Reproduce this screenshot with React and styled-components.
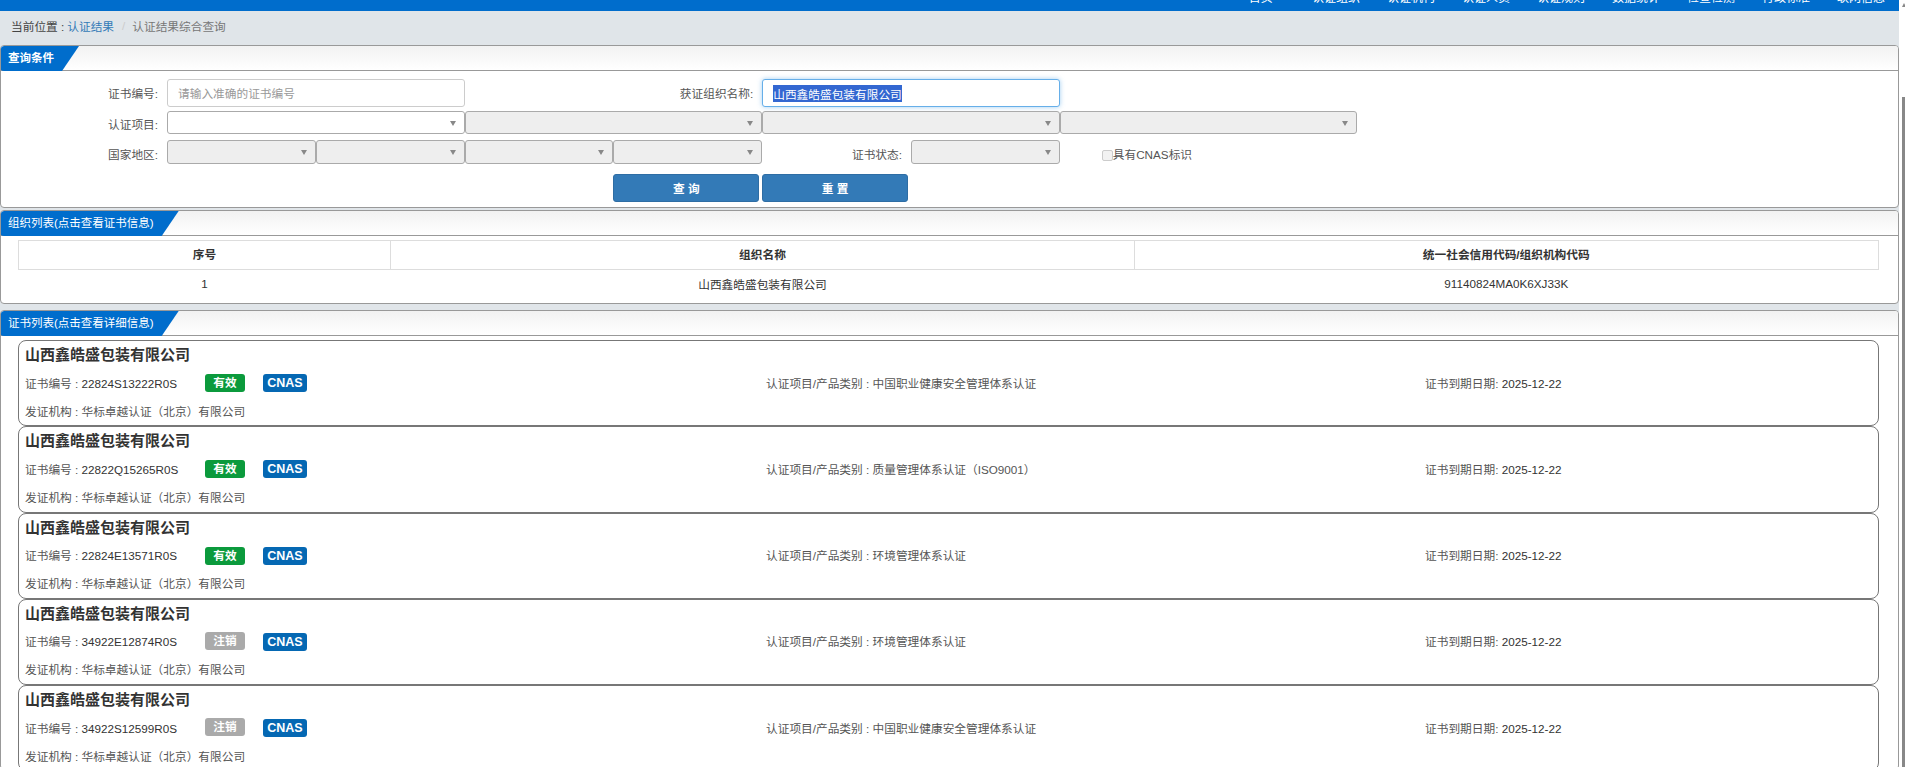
import React, { useEffect, useRef } from "react";
import styled, { createGlobalStyle } from "styled-components";

const GlobalStyle = createGlobalStyle`
  html, body {
    margin: 0;
    padding: 0;
    background: #fff;
    overflow: hidden;
  }
  body {
    font-family: "Liberation Sans", "Noto Sans CJK SC", sans-serif;
    font-size: 11.7px;
    color: #333;
  }
  * {
    box-sizing: border-box;
  }
`;

const Page = styled.div`
  display: flex;
  width: 1905px;
  height: 767px;
  overflow: hidden;
`;

const Main = styled.div`
  width: 1899px;
  flex: none;
  background: #e0e5e9;
`;

const Gutter = styled.div`
  flex: 1;
  background: #fff;
  padding: 3px 0 0 3px;
`;

const ScrollArrow = styled.div`
  width: 0;
  height: 0;
  border-left: 2px solid transparent;
  border-right: 2px solid transparent;
  border-bottom: 4px solid #888;
`;

const ScrollThumb = styled.div`
  margin-top: 90px;
  height: 670px;
  background: #888;
`;

const TopBar = styled.div`
  height: 11px;
  background: #006dcc;
  display: flex;
  justify-content: flex-end;
  align-items: flex-start;
  gap: 27px;
  padding-right: 14px;
  overflow: hidden;
`;

const NavItem = styled.span`
  color: #fff;
  font-size: 12px;
  line-height: 16px;
  margin-top: -10px;
  white-space: nowrap;

  &:first-child {
    margin-right: 12px;
  }
`;

const Crumbs = styled.div`
  height: 34px;
  display: flex;
  align-items: center;
  padding: 0 0 6px 11px;
  color: #444;
`;

const CrumbLink = styled.span`
  color: #337ab7;
  margin-left: 3px;
`;

const CrumbSep = styled.span`
  color: #ccc;
  margin: 0 7px 0 8px;
`;

const CrumbNow = styled.span`
  color: #777;
`;

const Panel = styled.section`
  background: #fff;
  border: 1px solid #999;
  border-radius: 4px;
  height: ${(p) => p.$height};
  margin-bottom: ${(p) => p.$gap || "0"};
  overflow: hidden;
`;

const PanelHead = styled.div`
  height: 25px;
  background: linear-gradient(#f2f2f2, #fff);
  border-bottom: 1px solid #999;
`;

const PanelTab = styled.div`
  display: inline-block;
  height: 25px;
  margin-left: -1px;
  padding: 0 25px 0 8px;
  line-height: 25px;
  color: #fff;
  background: #006dcc;
  font-size: 11.5px;
  font-weight: ${(p) => (p.$bold ? "bold" : "normal")};
  border-radius: 4px 0 0 4px;
  clip-path: polygon(0 0, 100% 0, calc(100% - 17px) 100%, 0 100%);
`;

const QueryForm = styled.div`
  display: grid;
  grid-template-columns: 166px repeat(8, 148.8px);
  grid-template-rows: 28px 23px 26px 28px;
  row-gap: 4px;
  padding-top: 8px;
`;

const FieldLabel = styled.label`
  grid-column: ${(p) => p.$col};
  align-self: ${(p) => (p.$middle ? "center" : "end")};
  padding: ${(p) => (p.$middle ? "2px 9px 0 0" : "0 9px 1px 0")};
  text-align: right;
  line-height: 16px;
  color: #555;
`;

const TextInput = styled.input`
  grid-column: span 2;
  height: 28px;
  padding: 0 10px;
  border: 1px solid #ccc;
  border-radius: 3px;
  outline: none;
  font: inherit;
  color: #333;
  background: #fff;

  &::placeholder {
    color: #999;
  }
  &:focus {
    border-color: #66afe9;
    box-shadow: 0 0 5px rgba(102, 175, 233, 0.6);
  }
  &::selection {
    background: #3367d1;
    color: #fff;
  }
`;

const SelectBox = styled.div`
  grid-column: span ${(p) => p.$span || 1};
  position: relative;
  border: 1px solid #aaa;
  border-radius: 3px;
  background: ${(p) => (p.$disabled ? "#eee" : "#fff")};

  &::after {
    content: "";
    position: absolute;
    right: 8px;
    top: 50%;
    margin-top: -2px;
    border-top: 5px solid #888;
    border-left: 3px solid transparent;
    border-right: 3px solid transparent;
  }
`;

const CheckField = styled.label`
  grid-column: 8 / span 2;
  align-self: end;
  display: flex;
  align-items: center;
  padding: 0 0 1px 42px;
  line-height: 16px;
  color: #555;
`;

const CheckBox = styled.input`
  appearance: none;
  width: 11px;
  height: 11px;
  margin: 0;
  border: 1px solid #ccc;
  border-radius: 2px;
  background: #f2f2f2;
`;

const ThirdRow = styled.div`
  display: contents;

  & > * {
    margin-top: 2px;
  }
`;

const ActionButton = styled.button`
  grid-column: ${(p) => p.$col};
  margin: 6px 3px 0 0;
  height: 28px;
  padding: 0 0 2px;
  border: 1px solid #2e6da4;
  border-radius: 3px;
  background: #337ab7;
  color: #fff;
  font: inherit;
  font-weight: bold;
`;

const OrgTable = styled.table`
  width: 1860.5px;
  margin: 4px 0 0 17px;
  border-collapse: collapse;
  table-layout: fixed;

  th {
    height: 29px;
    padding: 0 0 3px;
    border: 1px solid #ddd;
    font-weight: bold;
    color: #333;
  }
  td {
    height: 29px;
    padding: 0 0 2px;
    text-align: center;
    color: #333;
  }
`;

const CardList = styled.div`
  padding: 4px 19px 0 17px;
`;

const Card = styled.article`
  height: 86.25px;
  padding: 3px 6px;
  border: 1px solid #777;
  border-radius: 8px;
`;

const CardTitle = styled.h3`
  margin: 0 0 6px;
  font-size: 15px;
  font-weight: bold;
  line-height: 22px;
  color: #333;
`;

const CardRow = styled.div`
  display: grid;
  grid-template-columns: 741px 659px auto;
  align-items: center;
  height: 22px;
  padding-bottom: 2px;
  margin-bottom: 6px;
  color: #555;
`;

const CertCell = styled.div`
  display: flex;
  align-items: center;
`;

const CertCode = styled.span`
  width: 180px;
`;

const Value = styled.span`
  color: #333;
`;

const Badge = styled.span`
  display: block;
  width: ${(p) => p.$w};
  height: 18px;
  margin-right: 18px;
  position: relative;
  top: ${(p) => p.$drop};
  border-radius: 3px;
  background: ${(p) => p.$bg};
  color: #fff;
  font-size: ${(p) => p.$size || "11.7px"};
  font-weight: bold;
  line-height: 18px;
  text-align: center;
`;

const navItems = ["首页", "认证组织", "认证机构", "认证人员", "认证规则", "数据统计", "检查检测", "行政标准", "联网信息"];

const certs = [
  { code: "22824S13222R0S", valid: true, item: "中国职业健康安全管理体系认证" },
  { code: "22822Q15265R0S", valid: true, item: "质量管理体系认证（ISO9001）" },
  { code: "22824E13571R0S", valid: true, item: "环境管理体系认证" },
  { code: "34922E12874R0S", valid: false, item: "环境管理体系认证" },
  { code: "34922S12599R0S", valid: false, item: "中国职业健康安全管理体系认证" },
];

const orgName = "山西鑫皓盛包装有限公司";

export default function App() {
  const nameRef = useRef(null);

  // 页面打开时组织名称是选中状态
  useEffect(() => {
    nameRef.current.focus();
    nameRef.current.select();
  }, []);

  return (
    <Page>
      <GlobalStyle />
      <Main>
        <TopBar>
          {navItems.map((n) => (
            <NavItem key={n}>{n}</NavItem>
          ))}
        </TopBar>
        <Crumbs>
          当前位置 :<CrumbLink>认证结果</CrumbLink>
          <CrumbSep>/</CrumbSep>
          <CrumbNow>认证结果综合查询</CrumbNow>
        </Crumbs>

        <Panel $height="163px" $gap="2px">
          <PanelHead>
            <PanelTab $bold>查询条件</PanelTab>
          </PanelHead>
          <QueryForm>
            <FieldLabel $middle>证书编号:</FieldLabel>
            <TextInput placeholder="请输入准确的证书编号" />
            <FieldLabel $col="span 2" $middle>获证组织名称:</FieldLabel>
            <TextInput ref={nameRef} defaultValue={orgName} />

            <FieldLabel $col="1">认证项目:</FieldLabel>
            <SelectBox $span={2} />
            <SelectBox $span={2} $disabled />
            <SelectBox $span={2} $disabled />
            <SelectBox $span={2} $disabled />

            <ThirdRow>
              <FieldLabel $col="1">国家地区:</FieldLabel>
              <SelectBox $disabled />
              <SelectBox $disabled />
              <SelectBox $disabled />
              <SelectBox $disabled />
              <FieldLabel>证书状态:</FieldLabel>
              <SelectBox $disabled />
              <CheckField>
                <CheckBox type="checkbox" disabled />
                具有CNAS标识
              </CheckField>
            </ThirdRow>

            <ActionButton $col="5">查 询</ActionButton>
            <ActionButton $col="6">重 置</ActionButton>
          </QueryForm>
        </Panel>

        <Panel $height="94px" $gap="6px">
          <PanelHead>
            <PanelTab>组织列表(点击查看证书信息)</PanelTab>
          </PanelHead>
          <OrgTable>
            <colgroup>
              <col width="372" />
              <col width="744" />
              <col />
            </colgroup>
            <thead>
              <tr>
                <th>序号</th>
                <th>组织名称</th>
                <th>统一社会信用代码/组织机构代码</th>
              </tr>
            </thead>
            <tbody>
              <tr>
                <td>1</td>
                <td>{orgName}</td>
                <td>91140824MA0K6XJ33K</td>
              </tr>
            </tbody>
          </OrgTable>
        </Panel>

        <Panel $height="460px">
          <PanelHead>
            <PanelTab>证书列表(点击查看详细信息)</PanelTab>
          </PanelHead>
          <CardList>
            {certs.map((c) => (
              <Card key={c.code}>
                <CardTitle>{orgName}</CardTitle>
                <CardRow>
                  <CertCell>
                    <CertCode>
                      证书编号 : <Value>{c.code}</Value>
                    </CertCode>
                    <Badge $w="40px" $bg={c.valid ? "#0b9a3c" : "#aaa"} $drop={c.valid ? "1px" : "0"}>
                      {c.valid ? "有效" : "注销"}
                    </Badge>
                    <Badge $w="44px" $size="12.5px" $bg="#0568b3" $drop="1px">CNAS</Badge>
                  </CertCell>
                  <span>认证项目/产品类别 : {c.item}</span>
                  <span>
                    证书到期日期: <Value>2025-12-22</Value>
                  </span>
                </CardRow>
                <CardRow>
                  <span>发证机构 : 华标卓越认证（北京）有限公司</span>
                </CardRow>
              </Card>
            ))}
          </CardList>
        </Panel>
      </Main>
      <Gutter>
        <ScrollArrow />
        <ScrollThumb />
      </Gutter>
    </Page>
  );
}
